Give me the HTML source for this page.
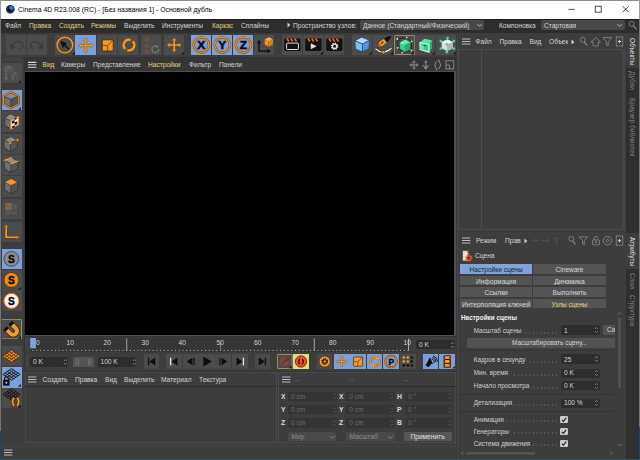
<!DOCTYPE html>
<html lang="ru">
<head>
<meta charset="utf-8">
<title>Cinema 4D R23.008 (RC) - [Без названия 1] - Основной дубль</title>
<style>
html,body{margin:0;padding:0;background:#3d3d3d;}
body{width:640px;height:460px;overflow:hidden;position:relative;font-family:"Liberation Sans",sans-serif;font-size:6.6px;color:#cfcfcf;}
#app{position:absolute;left:0;top:0;width:640px;height:460px;overflow:hidden;background:#3d3d3d;}
.abs,.t,.b,.p{position:absolute;}
.t{white-space:nowrap;line-height:10px;height:10px;}
.y{color:#e0d080;}
.w{color:#d4d4d4;}
.dim{color:#6e6e6e;}
.b{background:#4c4c4c;width:20.4px;height:20px;top:35px;}
.b svg,.lb svg,.tb svg{position:absolute;left:0;top:0;}
.lb{position:absolute;left:2px;width:19.5px;height:21px;background:#4b4b4b;}
.tb{position:absolute;top:354.300px;width:14.8px;height:15px;background:#4b4b4b;}
.blue{background:#7b9fd8;}
.fld{position:absolute;background:#2d2d2d;border-radius:2px;height:10px;}
.cl{position:absolute;font-weight:bold;color:#d8d8d8;line-height:10px;height:10px;font-size:6.8px;}
.cf{position:absolute;background:#353535;border-radius:1.5px;height:9.6px;}
.cv{position:absolute;color:#6c6c6c;line-height:10px;height:10px;white-space:nowrap;}
.sp{position:absolute;width:5px;height:8px;}
.lbl{position:absolute;white-space:nowrap;line-height:10px;height:10px;color:#cfcfcf;font-size:6.400px;}
.dots{position:absolute;height:0.900px;background:repeating-linear-gradient(to left,#8c8c8c 0,#8c8c8c 0.900px,transparent 0.900px,transparent 3.780px);}
.chk{position:absolute;width:7.8px;height:7.4px;background:#cbcbcb;border-radius:1.3px;}
.vt{position:absolute;white-space:nowrap;transform-origin:0 0;transform:rotate(90deg);line-height:10px;height:10px;}
.tabb{position:absolute;height:9.600px;background:#545454;text-align:center;line-height:11.400px;overflow:hidden;white-space:nowrap;color:#d8d8d8;}
</style>
</head>
<body>
<div id="app">

<!-- ===== title bar ===== -->
<div class="abs" id="titlebar" style="left:0;top:0;width:640px;height:18.700px;background:#ffffff;"></div>
<div class="abs" style="left:0;top:0;width:640px;height:1px;background:#8c8c8c;"></div>
<svg class="abs" style="left:5px;top:4px;" width="11" height="11" viewBox="0 0 11 11"><circle cx="5.3" cy="5.2" r="4.3" fill="#1a2748"/><circle cx="6.2" cy="4" r="2" fill="#3f74c8"/><circle cx="4.2" cy="6.3" r="1.6" fill="#0c1226"/><path d="M2.2 8.2 A4.3 4.3 0 0 0 8.6 8" stroke="#6d9be0" stroke-width="0.8" fill="none"/></svg>
<div class="t" style="left:18px;top:4.700px;font-size:7.800px;color:#000;transform:scaleX(0.876);transform-origin:0 0;">Cinema 4D R23.008 (RC) - [Без названия 1] - Основной дубль</div>
<svg class="abs" style="left:560px;top:0;" width="80" height="19" viewBox="0 0 80 19"><g stroke="#222" stroke-width="0.8" fill="none"><path d="M8.5 9.4H14.8"/><rect x="35.2" y="6.2" width="6" height="6"/><path d="M62.6 6.1L68.8 12.3M68.8 6.1L62.6 12.3"/></g></svg>

<!-- ===== menu bar ===== -->
<div class="abs" id="menubar" style="left:0;top:18.700px;width:640px;height:14.400px;background:#2d2d2d;"></div>
<div class="abs" style="left:0;top:18.700px;width:640px;height:1.500px;background:#1c1c1c;"></div>
<div class="t w" style="left:5px;top:20.5px;">Файл</div>
<div class="t y" style="left:29px;top:20.5px;">Правка</div>
<div class="t y" style="left:59px;top:20.5px;">Создать</div>
<div class="t y" style="left:91px;top:20.5px;">Режимы</div>
<div class="t w" style="left:124px;top:20.5px;">Выделить</div>
<div class="t w" style="left:162px;top:20.5px;">Инструменты</div>
<div class="t y" style="left:212px;top:20.5px;">Каркас</div>
<div class="t w" style="left:241px;top:20.5px;">Сплайны</div>
<svg class="abs" style="left:286.500px;top:22.300px;" width="4" height="6" viewBox="0 0 4 6"><path d="M0.5 0.5L3.3 3L0.5 5.5Z" fill="#d0d0d0"/></svg>
<div class="t w" style="left:293px;top:20.5px;">Пространство узлов:</div>
<div class="fld" style="left:360px;top:20.200px;width:124px;height:9.600px;background:#494949;"></div>
<div class="t w" style="left:363px;top:20.5px;font-size:6.5px;">Данное (Стандартный/Физический)</div>
<svg class="abs" style="left:476px;top:23px;" width="7" height="5" viewBox="0 0 7 5"><path d="M1.400 1.200L3.500 3.300L5.600 1.200" stroke="#d0d0d0" stroke-width="0.800" fill="none"/></svg>
<div class="t w" style="left:499px;top:20.5px;">Компоновка</div>
<div class="fld" style="left:541px;top:20.200px;width:84px;height:9.600px;background:#494949;"></div>
<div class="t w" style="left:544px;top:20.5px;">Стартовая</div>
<svg class="abs" style="left:616px;top:23px;" width="7" height="5" viewBox="0 0 7 5"><path d="M1.400 1.200L3.500 3.300L5.600 1.200" stroke="#d0d0d0" stroke-width="0.800" fill="none"/></svg>
<svg class="abs" style="left:628px;top:20px;" width="10" height="11" viewBox="0 0 10 11"><circle cx="3.600" cy="3.800" r="2.500" stroke="#8e8e8e" stroke-width="0.800" fill="none"/><path d="M5.300 5.700L8.400 9.400" stroke="#8e8e8e" stroke-width="1.100"/></svg>

<!-- ===== top toolbar ===== -->
<div class="abs" id="toolbar" style="left:0;top:33px;width:457px;height:24px;background:#3d3d3d;"></div>
<svg class="abs" style="left:1px;top:36px;" width="4" height="19" viewBox="0 0 4 19"><path d="M1.2 1V18M2.8 1V18" stroke="#5a5a5a" stroke-width="0.7" stroke-dasharray="0.8 0.9"/></svg>
<div class="b" id="b-undo" style="left:6px;"><svg width="20.5" height="20" viewBox="0 0 20.5 20"><path d="M14.2 14.2C18.4 11.8 17.6 6.4 12.4 6.4C9.8 6.4 7.8 8.2 6.4 10.8" stroke="#3c3c3c" stroke-width="1.5" fill="none"/><path d="M3.9 14.6L4.6 8.3L10 12.9Z" fill="#3c3c3c"/></svg></div>
<div class="b" id="b-redo" style="left:26.7px;"><svg width="20.5" height="20" viewBox="0 0 20.5 20"><g transform="translate(20.5 0) scale(-1 1)"><path d="M14.2 14.2C18.4 11.8 17.6 6.4 12.4 6.4C9.8 6.4 7.8 8.2 6.4 10.8" stroke="#3c3c3c" stroke-width="1.5" fill="none"/><path d="M3.9 14.6L4.6 8.3L10 12.9Z" fill="#3c3c3c"/></g></svg></div>
<div class="b" id="b-sel" style="left:55px;"><svg width="20.5" height="20" viewBox="0 0 20.5 20"><circle cx="9.900" cy="10.100" r="7.800" fill="none" stroke="#8a4a08" stroke-width="2"/><circle cx="9.900" cy="10.100" r="7.800" fill="none" stroke="#f39a2b" stroke-width="1.300"/><path d="M5.300 5.500L12 8.600L10.100 9.900L14.200 13.500L13.300 14.500L9.200 10.900L7.800 13.400Z" fill="#111"/><path d="M19.8 16.6V19.4H17Z" fill="#161616"/></svg></div>
<div class="b blue" id="b-move" style="left:75.300px;width:20.700px;"><svg width="20.5" height="20" viewBox="0 0 20.5 20"><g stroke="#8a4a08" fill="#8a4a08" transform="translate(0 0)"><g transform="rotate(0 10.9 10.5)"><path d="M10.9 10.5V5.499999999999999" stroke-width="2.4" fill="none"/><path d="M8.4 5.699999999999999L10.9 2.8L13.4 5.699999999999999Z" stroke-width="0.1"/></g><g transform="rotate(90 10.9 10.5)"><path d="M10.9 10.5V5.499999999999999" stroke-width="2.4" fill="none"/><path d="M8.4 5.699999999999999L10.9 2.8L13.4 5.699999999999999Z" stroke-width="0.1"/></g><g transform="rotate(180 10.9 10.5)"><path d="M10.9 10.5V5.499999999999999" stroke-width="2.4" fill="none"/><path d="M8.4 5.699999999999999L10.9 2.8L13.4 5.699999999999999Z" stroke-width="0.1"/></g><g transform="rotate(270 10.9 10.5)"><path d="M10.9 10.5V5.499999999999999" stroke-width="2.4" fill="none"/><path d="M8.4 5.699999999999999L10.9 2.8L13.4 5.699999999999999Z" stroke-width="0.1"/></g></g><g stroke="#f39a2b" fill="#f39a2b"><g transform="rotate(0 10.9 10.5)"><path d="M10.9 10.5V5.499999999999999" stroke-width="1.5" fill="none"/><path d="M8.9 5.699999999999999L10.9 3.3L12.9 5.699999999999999Z" stroke-width="0.1"/></g><g transform="rotate(90 10.9 10.5)"><path d="M10.9 10.5V5.499999999999999" stroke-width="1.5" fill="none"/><path d="M8.9 5.699999999999999L10.9 3.3L12.9 5.699999999999999Z" stroke-width="0.1"/></g><g transform="rotate(180 10.9 10.5)"><path d="M10.9 10.5V5.499999999999999" stroke-width="1.5" fill="none"/><path d="M8.9 5.699999999999999L10.9 3.3L12.9 5.699999999999999Z" stroke-width="0.1"/></g><g transform="rotate(270 10.9 10.5)"><path d="M10.9 10.5V5.499999999999999" stroke-width="1.5" fill="none"/><path d="M8.9 5.699999999999999L10.9 3.3L12.9 5.699999999999999Z" stroke-width="0.1"/></g></g></svg></div>
<div class="b" id="b-scale" style="left:96.5px;"><svg width="20.5" height="20" viewBox="0 0 20.5 20"><rect x="5.2" y="4.8" width="11" height="11.2" rx="1" fill="#f39a2b" stroke="#4a2a05" stroke-width="0.9"/><path d="M5.2 10.6H10.6V16M10.6 10.6L16 5" stroke="#6a3c08" stroke-width="0.8" fill="none"/></svg></div>
<div class="b" id="b-rot" style="left:117.5px;"><svg width="20.5" height="20" viewBox="0 0 20.5 20"><g stroke="#8a4a08"><path d="M7.250 13.850A5.300 5.300 0 0 1 12.370 4.980" fill="none" stroke-width="3"/><path d="M14.750 6.350A5.300 5.300 0 0 1 9.630 15.220" fill="none" stroke-width="3"/></g><path d="M13.300 5.300L12.700 3.300L11.900 6.600Z M8.700 14.900L9.300 16.900L10.100 13.600Z" fill="#f39a2b" stroke="#8a4a08" stroke-width="0.400"/><g stroke="#f39a2b"><path d="M7.250 13.850A5.300 5.300 0 0 1 12.370 4.980" fill="none" stroke-width="2.200"/><path d="M14.750 6.350A5.300 5.300 0 0 1 9.630 15.220" fill="none" stroke-width="2.200"/></g></svg></div>
<div class="b" id="b-psr" style="left:141px;"><svg width="20.5" height="20" viewBox="0 0 20.5 20"><g font-family="Liberation Sans,sans-serif" font-weight="bold" font-size="6.200" fill="#87503f"><text x="3.300" y="6.600">P</text><text x="3.300" y="12.600">S</text><text x="3.300" y="18.500">R</text></g><path d="M16.300 11.500A3.400 3.400 0 1 0 17.800 14.300" fill="none" stroke="#7e7e7e" stroke-width="1.100"/><path d="M15.200 9.900L17.900 11.600L15.300 13Z" fill="#7e7e7e"/></svg></div>
<div class="b" id="b-plus" style="left:163.5px;"><svg width="20.5" height="20" viewBox="0 0 20.5 20"><g stroke="#8a4a08" fill="#8a4a08"><g transform="rotate(0 10.2 10)"><path d="M10.2 10V5.1000000000000005" stroke-width="2.2" fill="none"/><path d="M7.8999999999999995 5.300000000000001L10.2 2.7L12.5 5.300000000000001Z" stroke-width="0.1"/></g><g transform="rotate(90 10.2 10)"><path d="M10.2 10V5.1000000000000005" stroke-width="2.2" fill="none"/><path d="M7.8999999999999995 5.300000000000001L10.2 2.7L12.5 5.300000000000001Z" stroke-width="0.1"/></g><g transform="rotate(180 10.2 10)"><path d="M10.2 10V5.1000000000000005" stroke-width="2.2" fill="none"/><path d="M7.8999999999999995 5.300000000000001L10.2 2.7L12.5 5.300000000000001Z" stroke-width="0.1"/></g><g transform="rotate(270 10.2 10)"><path d="M10.2 10V5.1000000000000005" stroke-width="2.2" fill="none"/><path d="M7.8999999999999995 5.300000000000001L10.2 2.7L12.5 5.300000000000001Z" stroke-width="0.1"/></g></g><g stroke="#f39a2b" fill="#f39a2b"><g transform="rotate(0 10.2 10)"><path d="M10.2 10V5.199999999999999" stroke-width="1.4" fill="none"/><path d="M8.299999999999999 5.3999999999999995L10.2 3.0999999999999996L12.1 5.3999999999999995Z" stroke-width="0.1"/></g><g transform="rotate(90 10.2 10)"><path d="M10.2 10V5.199999999999999" stroke-width="1.4" fill="none"/><path d="M8.299999999999999 5.3999999999999995L10.2 3.0999999999999996L12.1 5.3999999999999995Z" stroke-width="0.1"/></g><g transform="rotate(180 10.2 10)"><path d="M10.2 10V5.199999999999999" stroke-width="1.4" fill="none"/><path d="M8.299999999999999 5.3999999999999995L10.2 3.0999999999999996L12.1 5.3999999999999995Z" stroke-width="0.1"/></g><g transform="rotate(270 10.2 10)"><path d="M10.2 10V5.199999999999999" stroke-width="1.4" fill="none"/><path d="M8.299999999999999 5.3999999999999995L10.2 3.0999999999999996L12.1 5.3999999999999995Z" stroke-width="0.1"/></g></g><path d="M19.8 16.6V19.4H17Z" fill="#161616"/></svg></div>
<div class="b blue" id="b-x" style="left:191px;"><svg width="20.5" height="20" viewBox="0 0 20.5 20"><circle cx="10.350" cy="9.900" r="7.600" fill="none" stroke="#6a3a08" stroke-width="2.300"/><circle cx="10.350" cy="9.900" r="7.600" fill="none" stroke="#f0871a" stroke-width="1.600"/><text transform="translate(10.350 13.850) scale(1.100 1)" x="0" y="0" text-anchor="middle" font-family="Liberation Sans,sans-serif" font-weight="bold" font-size="10.900" fill="#0c0c0c" stroke="#0c0c0c" stroke-width="0.500">X</text></svg></div>
<div class="b blue" id="b-y" style="left:212px;"><svg width="20.5" height="20" viewBox="0 0 20.5 20"><circle cx="10.350" cy="9.900" r="7.600" fill="none" stroke="#6a3a08" stroke-width="2.300"/><circle cx="10.350" cy="9.900" r="7.600" fill="none" stroke="#f0871a" stroke-width="1.600"/><text transform="translate(10.350 13.850) scale(1.100 1)" x="0" y="0" text-anchor="middle" font-family="Liberation Sans,sans-serif" font-weight="bold" font-size="10.900" fill="#0c0c0c" stroke="#0c0c0c" stroke-width="0.500">Y</text></svg></div>
<div class="b blue" id="b-z" style="left:233px;"><svg width="20.5" height="20" viewBox="0 0 20.5 20"><circle cx="10.350" cy="9.900" r="7.600" fill="none" stroke="#6a3a08" stroke-width="2.300"/><circle cx="10.350" cy="9.900" r="7.600" fill="none" stroke="#f0871a" stroke-width="1.600"/><text transform="translate(10.350 13.850) scale(1.100 1)" x="0" y="0" text-anchor="middle" font-family="Liberation Sans,sans-serif" font-weight="bold" font-size="10.900" fill="#0c0c0c" stroke="#0c0c0c" stroke-width="0.500">Z</text></svg></div>
<div class="b" id="b-coord" style="left:254px;"><svg width="20.5" height="20" viewBox="0 0 20.5 20"><path d="M5.100 7V16.100H14.500" stroke="#0c0c0c" stroke-width="1.300" fill="none"/><path d="M3.300 8.200L5.100 4.600L6.900 8.200Z M13.400 14.300L17 16.100L13.400 17.900Z" fill="#0c0c0c"/><path d="M10.500 4.600L15 2.300L19 4.300L18.600 9.400L14.400 11.800L10.300 9.400Z" fill="#f39a2b" stroke="#7a4508" stroke-width="0.600" stroke-linejoin="round"/><path d="M10.500 4.600L15 2.300L19 4.300L14.600 6.800Z" fill="#f7ad4e"/><path d="M14.600 6.800L19 4.300L18.600 9.400L14.400 11.800Z" fill="#e08418"/><path d="M10.500 4.600L14.600 6.800L19 4.300M14.600 6.800L14.400 11.800" stroke="#8a5010" stroke-width="0.500" fill="none"/></svg></div>
<div class="b" id="b-clap1" style="left:282px;"><svg width="20.5" height="20" viewBox="0 0 20.5 20"><rect x="2.200" y="3.500" width="16.300" height="12.400" rx="1.300" fill="#121212"/><path d="M5 3.600L6.900 6.400M8.800 3.600L10.700 6.400M12.600 3.600L14.500 6.400" stroke="#f0642a" stroke-width="1.700"/><rect x="4.600" y="8.100" width="11.800" height="6.400" rx="0.800" fill="none" stroke="#e4e4e4" stroke-width="1"/></svg></div>
<div class="b" id="b-clap2" style="left:303px;"><svg width="20.5" height="20" viewBox="0 0 20.5 20"><rect x="2.200" y="3.500" width="16.300" height="12.400" rx="1.300" fill="#121212"/><path d="M5 3.600L6.900 6.400M8.800 3.600L10.700 6.400M12.600 3.600L14.500 6.400" stroke="#f0642a" stroke-width="1.700"/><path d="M7.800 8.300L13.600 11.300L7.800 14.300Z" fill="#e4e4e4"/><path d="M19.8 16.6V19.4H17Z" fill="#161616"/></svg></div>
<div class="b" id="b-clap3" style="left:324px;"><svg width="20.5" height="20" viewBox="0 0 20.5 20"><rect x="2.200" y="3.500" width="16.300" height="12.400" rx="1.300" fill="#121212"/><path d="M5 3.600L6.900 6.400M8.800 3.600L10.700 6.400M12.600 3.600L14.500 6.400" stroke="#f0642a" stroke-width="1.700"/><circle cx="10.600" cy="11.300" r="2.200" fill="none" stroke="#e4e4e4" stroke-width="1.400"/><circle cx="10.600" cy="11.300" r="3.200" fill="none" stroke="#e4e4e4" stroke-width="1.200" stroke-dasharray="1.250 1.260"/></svg></div>
<div class="b" id="b-cube" style="left:352px;"><svg width="20.5" height="20" viewBox="0 0 20.5 20"><path d="M2.8999999999999995 5.914999999999999L9.469999999999999 2.2649999999999997L17.5 5.184999999999999L10.565 9.0175Z" fill="#b4dcfa" stroke="#244a78" stroke-width="0.7" stroke-linejoin="round"/><path d="M2.8999999999999995 5.914999999999999L10.565 9.0175L10.565 16.865L3.483999999999999 13.9523Z" fill="#7dbdf0" stroke="#244a78" stroke-width="0.7" stroke-linejoin="round"/><path d="M10.565 9.0175L17.5 5.184999999999999L16.916 13.41575L10.565 16.865Z" fill="#4f97d8" stroke="#244a78" stroke-width="0.7" stroke-linejoin="round"/><path d="M19.8 16.6V19.4H17Z" fill="#161616"/></svg></div>
<div class="b" id="b-pen" style="left:373px;"><svg width="20.5" height="20" viewBox="0 0 20.5 20"><path d="M4.400 12.200L6 6.400L11 3.400L14.300 7.400L9.600 11.200Z" fill="#f39a2b" stroke="#4a2a05" stroke-width="0.600"/><path d="M11 3.400L15 1.200L18.600 1.500L14.300 7.400Z" fill="#111"/><path d="M4.600 12L9.300 7.600" stroke="#3a2005" stroke-width="0.800"/><circle cx="9.500" cy="7.400" r="0.900" fill="#3a2005"/><path d="M2.500 13.700Q10.400 20.600 18.500 13.300" stroke="#2a2a2a" stroke-width="2.200" fill="none"/><path d="M2.500 13.700Q10.400 20.600 18.500 13.300" stroke="#e6e6e6" stroke-width="1.200" fill="none"/><circle cx="10.400" cy="17.200" r="1.700" fill="#f39a2b" stroke="#4a2a05" stroke-width="0.500"/><path d="M19.8 16.6V19.4H17Z" fill="#161616"/></svg></div>
<div class="b" id="b-gen" style="left:393.700px;width:21.300px;"><svg width="21.3" height="20" viewBox="0 0 21.3 20"><rect x="0.400" y="0.400" width="20.500" height="19.200" rx="1" fill="none" stroke="#b3ab68" stroke-width="0.800"/><path d="M3.300 4L12.700 2.300L17.600 6.400L17.400 15.400L8.200 17.600L3.600 12.800Z M3.300 4L8.300 8.200L17.600 6.400M8.300 8.200L8.200 17.600" fill="none" stroke="#1e1e1e" stroke-width="0.800"/><path d="M6 7.200L11.500 4.800L16.300 7.400L16 14.300L10.600 17L6.200 13.600Z" fill="#2fd98c"/><path d="M6 7.200L11.500 4.800L16.300 7.400L10.800 9.800Z" fill="#5cf0ae"/><path d="M10.800 9.800L16.300 7.400L16 14.300L10.600 17Z" fill="#1fb06e"/><circle cx="3.3" cy="4" r="0.900" fill="#e8e8e8"/><circle cx="12.7" cy="2.3" r="0.900" fill="#e8e8e8"/><circle cx="17.6" cy="6.4" r="0.900" fill="#e8e8e8"/><circle cx="3.6" cy="12.8" r="0.900" fill="#e8e8e8"/><circle cx="17.4" cy="15.4" r="0.900" fill="#e8e8e8"/><circle cx="8.2" cy="17.6" r="0.900" fill="#e8e8e8"/><circle cx="8.3" cy="8.2" r="0.900" fill="#e8e8e8"/><path d="M19.8 16.6V19.4H17Z" fill="#161616"/></svg></div>
<div class="b" id="b-hollow" style="left:415px;"><svg width="20.5" height="20" viewBox="0 0 20.5 20"><path d="M4.800 7.500L9.500 3.700L17.300 5.600L14.100 9.500Z" fill="#4fe8a2"/><path d="M14.100 9.500L17.300 5.600L17 13.300L14 17.300Z" fill="#23b572"/><path d="M4.800 7.500L14.100 9.500L14 17.300L5.200 14.600Z" fill="#2fd98c" stroke="#f2f2f2" stroke-width="1.050" stroke-linejoin="round"/><path d="M6.200 9L9 11.300V14.200L6.200 13.800Z" fill="#54eaa8"/><path d="M8.600 9.900L11.400 10.500V11.700L8.600 11.100Z" fill="#1a4a34"/><path d="M19.8 16.6V19.4H17Z" fill="#161616"/></svg></div>
<div class="b" id="b-def" style="left:436px;"><svg width="20.5" height="20" viewBox="0 0 20.5 20"><path d="M5.600 7L11.300 4.600L17 7L16.800 13.400L11 16L5.800 13.400Z" fill="#dcdcdc"/><path d="M5.600 7L11.300 4.600L17 7L11.100 9.600Z" fill="#f4f4f4"/><path d="M11.100 9.600L17 7L16.800 13.400L11 16Z" fill="#b4b4b4"/><circle cx="11.5" cy="3.2" r="1.350" fill="#2fe08e"/><circle cx="4.9" cy="6.2" r="1.350" fill="#2fe08e"/><circle cx="17.9" cy="6.2" r="1.350" fill="#2fe08e"/><circle cx="10.9" cy="9.4" r="1.350" fill="#2fe08e"/><circle cx="4.9" cy="13.6" r="1.350" fill="#2fe08e"/><circle cx="17.9" cy="13.6" r="1.350" fill="#2fe08e"/><circle cx="10.9" cy="17.2" r="1.350" fill="#2fe08e"/><path d="M19.8 16.6V19.4H17Z" fill="#161616"/></svg></div>

<!-- ===== left toolbar ===== -->
<div class="abs" id="leftbar" style="left:0;top:57px;width:24px;height:389px;background:#3d3d3d;"></div>
<svg class="abs" style="left:2px;top:57px;" width="20" height="5" viewBox="0 0 20 5"><path d="M1 1.5H19M1 3.3H19" stroke="#5a5a5a" stroke-width="0.7" stroke-dasharray="0.8 0.9"/></svg>
<div class="lb" id="l-make" style="top:62.5px;height:20.5px;"><svg width="19.5" height="20.3" viewBox="0 0 19.5 20.3"><path d="M2 4.5L6 2.5L11 4.5L6.5 6.3Z" fill="#646464"/><path d="M2 4.5L6.5 6.3L6.5 10.5L2 8.8Z" fill="#5c5c5c"/><path d="M6.5 6.3L11 4.5L11 8.5L6.5 10.5Z" fill="#565656"/><path d="M6 2.5L11 4.5L11 8.5L6.5 10.5L2 8.8L2 4.5Z M2 4.5L6.5 6.3L11 4.5M6.5 6.3L6.5 10.5" fill="none" stroke="#505050" stroke-width="0.5" stroke-linejoin="round"/><path d="M4.300 10V15.300" stroke="#686868" stroke-width="1.600"/><path d="M1.900 14.600H6.700L4.300 17.800Z" fill="#686868"/><path d="M8.9 10.6L12.8 8.6L16.9 10.6L12.8 12.6Z" fill="#7c5a4c"/><path d="M8.9 10.6L12.8 12.6L12.8 18.4L8.9 16.2Z" fill="#5e5e5e"/><path d="M12.8 12.6L16.9 10.6L16.9 16.2L12.8 18.4Z" fill="#525252"/><path d="M12.8 8.6L16.9 10.6L16.9 16.2L12.8 18.4L8.9 16.2L8.9 10.6Z M8.9 10.6L12.8 12.6L16.9 10.6M12.8 12.6L12.8 18.4" fill="none" stroke="#464646" stroke-width="0.5" stroke-linejoin="round"/><path d="M18.900 17V19.800H16.100Z" fill="#161616"/></svg></div>
<div class="lb blue" id="l-model" style="top:90px;height:20.3px;"><svg width="19.5" height="20.3" viewBox="0 0 19.5 20.3"><path d="M1.6 6L8.9 2.1L16.7 6L8.9 9.3Z" fill="#8c8c8c"/><path d="M1.6 6L8.9 9.3L8.9 18.2L1.6 14Z" fill="#6f6f6f"/><path d="M8.9 9.3L16.7 6L16.7 14L8.9 18.2Z" fill="#545454"/><path d="M8.9 2.1L16.7 6L16.7 14L8.9 18.2L1.6 14L1.6 6Z M1.6 6L8.9 9.3L16.7 6M8.9 9.3L8.9 18.2" fill="none" stroke="#2c2c2c" stroke-width="0.7" stroke-linejoin="round"/><path d="M8.900 2.100L16.700 6L16.700 14L8.900 18.200L1.600 14L1.600 6Z" fill="none" stroke="#5a3005" stroke-width="1.900" stroke-linejoin="round"/><path d="M8.900 2.100L16.700 6L16.700 14L8.900 18.200L1.600 14L1.600 6Z" fill="none" stroke="#f08a1c" stroke-width="1.100" stroke-linejoin="round"/><path d="M18.900 17V19.800H16.100Z" fill="#161616"/></svg></div>
<div class="lb" id="l-tex" style="top:111px;height:20.5px;"><svg width="19.5" height="20.3" viewBox="0 0 19.5 20.3"><path d="M2.8 6.8L8.4 2.8L15.5 6.3L8.7 10Z" fill="#8c8c8c"/><path d="M2.8 6.8L8.7 10L8.7 17.8L2.8 14.3Z" fill="#6f6f6f"/><path d="M8.7 10L15.5 6.3L15.5 14L8.7 17.8Z" fill="#545454"/><path d="M8.4 2.8L15.5 6.3L15.5 14L8.7 17.8L2.8 14.3L2.8 6.8Z M2.8 6.8L8.7 10L15.5 6.3M8.7 10L8.7 17.8" fill="none" stroke="#2c2c2c" stroke-width="0.7" stroke-linejoin="round"/><path d="M8.800 9.600L16.600 5.600L16.600 13.600L8.800 18Z" fill="#f4f4f4" stroke="#f08a1c" stroke-width="1.200" stroke-linejoin="round"/><path d="M10 10.300L12.600 9L12.600 11.600L10 12.900Z M12.600 11.600L15.300 10.300L15.300 12.900L12.600 14.200Z M10 15.500L12.600 14.200L12.600 16.800L10 16.700Z M12.600 9L15.300 7.700L15.300 7.600L12.600 6.500Z" fill="#111"/></svg></div>
<div class="lb" id="l-pt" style="top:134px;height:20.3px;"><svg width="19.5" height="20.3" viewBox="0 0 19.5 20.3"><path d="M2 6L8.9 2.6L15.5 6.1L8.1 9.1Z" fill="#8c8c8c"/><path d="M2 6L8.1 9.1L8.7 17.6L2 13.8Z" fill="#6f6f6f"/><path d="M8.1 9.1L15.5 6.1L15.5 13.5L8.7 17.6Z" fill="#545454"/><path d="M8.9 2.6L15.5 6.1L15.5 13.5L8.7 17.6L2 13.8L2 6Z M2 6L8.1 9.1L15.5 6.1M8.1 9.1L8.7 17.6" fill="none" stroke="#2c2c2c" stroke-width="0.7" stroke-linejoin="round"/><circle cx="8.100" cy="9.100" r="1.450" fill="#f39a2b" stroke="#5a3005" stroke-width="0.400"/><circle cx="15.500" cy="6.100" r="1.450" fill="#f39a2b" stroke="#5a3005" stroke-width="0.400"/></svg></div>
<div class="lb" id="l-edge" style="top:155px;height:20.3px;"><svg width="19.5" height="20.3" viewBox="0 0 19.5 20.3"><path d="M2.4 5.3L9.8 2.7L15.9 6.2L8.9 8.8Z" fill="#8c8c8c"/><path d="M2.4 5.3L8.9 8.8L8.9 17.6L2.4 13.6Z" fill="#6f6f6f"/><path d="M8.9 8.8L15.9 6.2L15.9 13.8L8.9 17.6Z" fill="#545454"/><path d="M9.8 2.7L15.9 6.2L15.9 13.8L8.9 17.6L2.4 13.6L2.4 5.3Z M2.4 5.3L8.9 8.8L15.9 6.2M8.9 8.8L8.9 17.6" fill="none" stroke="#2c2c2c" stroke-width="0.7" stroke-linejoin="round"/><path d="M2.400 5.300L9.800 2.700M8.900 8.800L15.900 6.200" stroke="#f39a2b" stroke-width="1.300" stroke-linecap="round"/></svg></div>
<div class="lb" id="l-poly" style="top:176px;height:20.5px;"><svg width="19.5" height="20.3" viewBox="0 0 19.5 20.3"><path d="M2.6 5.9L9.2 2.7L15.7 6.2L8.9 9.5Z" fill="#8c8c8c"/><path d="M2.6 5.9L8.9 9.5L8.9 17.8L2.6 13.8Z" fill="#6f6f6f"/><path d="M8.9 9.5L15.7 6.2L15.7 13.8L8.9 17.8Z" fill="#545454"/><path d="M9.2 2.7L15.7 6.2L15.7 13.8L8.9 17.8L2.6 13.8L2.6 5.9Z M2.6 5.9L8.9 9.5L15.7 6.2M8.9 9.5L8.9 17.8" fill="none" stroke="#2c2c2c" stroke-width="0.7" stroke-linejoin="round"/><path d="M2.600 5.900L9.200 2.700L15.700 6.200L8.900 9.500Z" fill="#f39a2b" stroke="#5a3a10" stroke-width="0.500"/></svg></div>
<div class="lb" id="l-uv" style="top:198.5px;height:20px;"><svg width="19.5" height="20.3" viewBox="0 0 19.5 20.3"><rect x="2.800" y="3.700" width="7.300" height="7.500" fill="#7a644c"/><rect x="11.100" y="5" width="4" height="5.400" fill="#585858"/><rect x="3.800" y="12.300" width="5.200" height="3.800" fill="#585858"/><rect x="10.200" y="12" width="4.800" height="4.100" fill="#585858"/><rect x="2.300" y="3.200" width="13.300" height="13.400" fill="none" stroke="#454545" stroke-width="0.500"/></svg></div>
<div class="lb" id="l-axis" style="top:221.5px;height:20.3px;"><svg width="19.5" height="20.3" viewBox="0 0 19.5 20.3"><path d="M4.200 4.500V15.300H15" stroke="#6a3a08" stroke-width="2.400" fill="none"/><path d="M4.200 4.500V15.300H15" stroke="#f39a2b" stroke-width="1.600" fill="none"/><path d="M2.400 5.600L4.200 2.300L6 5.600Z M14.200 13.500L17.500 15.300L14.200 17.100Z" fill="#f39a2b" stroke="#6a3a08" stroke-width="0.400"/></svg></div>
<div class="lb blue" id="l-s1" style="top:248.8px;height:20.3px;"><svg width="19.5" height="20.3" viewBox="0 0 19.5 20.3"><circle cx="9.400" cy="9.900" r="7.4" fill="#8b8b8b" stroke="#3a3a3a" stroke-width="0.8"/><text x="9.400" y="13.600" text-anchor="middle" font-family="Liberation Sans,sans-serif" font-weight="bold" font-size="10.200" fill="#0c0c0c" stroke="#0c0c0c" stroke-width="0.400">S</text></svg></div>
<div class="lb" id="l-s2" style="top:269.6px;height:20.3px;"><svg width="19.5" height="20.3" viewBox="0 0 19.5 20.3"><circle cx="9.400" cy="9.900" r="7.4" fill="#f08a1c" stroke="#3a2a1a" stroke-width="0.7"/><text x="9.400" y="13.600" text-anchor="middle" font-family="Liberation Sans,sans-serif" font-weight="bold" font-size="10.200" fill="#0c0c0c" stroke="#0c0c0c" stroke-width="0.400">S</text><path d="M18.900 17V19.800H16.100Z" fill="#161616"/></svg></div>
<div class="lb" id="l-s3" style="top:290.4px;height:20.5px;"><svg width="19.5" height="20.3" viewBox="0 0 19.5 20.3"><circle cx="9.400" cy="10.900" r="8.200" fill="#7a2a05"/><circle cx="9.400" cy="10.900" r="7.5" fill="#f2f2f2" stroke="#f0741c" stroke-width="1.0"/><text x="9.400" y="14.600" text-anchor="middle" font-family="Liberation Sans,sans-serif" font-weight="bold" font-size="10.200" fill="#0c0c0c" stroke="#0c0c0c" stroke-width="0.400">S</text></svg></div>
<div class="lb" id="l-snap" style="top:319px;height:20.3px;"><svg width="19.5" height="20.3" viewBox="0 0 19.5 20.3"><rect x="-0.400" y="0.200" width="20" height="19.800" rx="1.300" fill="none" stroke="#b3ab68" stroke-width="0.900"/><g transform="translate(0.600 0.800) rotate(-45 10.600 11.200)"><path d="M6.800 3.800V11.200A3.800 3.800 0 0 0 14.400 11.200V3.800" fill="none" stroke="#3a2005" stroke-width="5"/><path d="M6.800 5.500V11.200A3.800 3.800 0 0 0 14.400 11.200V5.500" fill="none" stroke="#f39a2b" stroke-width="4"/><path d="M6.800 3.300V6.300M14.400 3.300V6.300" stroke="#111" stroke-width="4.600"/></g><path d="M18.900 17V19.800H16.100Z" fill="#161616"/></svg></div>
<div class="lb" id="l-grid1" style="top:346.3px;height:20.2px;"><svg width="19.5" height="20.3" viewBox="0 0 19.5 20.3"><path d="M0.6999999999999993 10.2L9.5 4.199999999999999L18.3 10.2L9.5 16.2Z" fill="#f39a2b"/><path d="M0.70 10.20L9.50 16.20M0.70 10.20L9.50 4.20M2.90 8.70L11.70 14.70M2.90 11.70L11.70 5.70M5.10 7.20L13.90 13.20M5.10 13.20L13.90 7.20M7.30 5.70L16.10 11.70M7.30 14.70L16.10 8.70M9.50 4.20L18.30 10.20M9.50 16.20L18.30 10.20" stroke="#5a3005" stroke-width="0.9" fill="none"/></svg></div>
<div class="lb blue" id="l-grid2" style="top:367px;height:20.5px;"><svg width="19.5" height="20.3" viewBox="0 0 19.5 20.3"><path d="M0.90 7.40L9.50 13.20M0.90 7.40L9.50 1.60M3.05 5.95L11.65 11.75M3.05 8.85L11.65 3.05M5.20 4.50L13.80 10.30M5.20 10.30L13.80 4.50M7.35 3.05L15.95 8.85M7.35 11.75L15.95 5.95M9.50 1.60L18.10 7.40M9.50 13.20L18.10 7.40" stroke="#111" stroke-width="0.9" fill="none"/><rect x="1.200" y="12.800" width="6.400" height="5.800" fill="#0c0c0c"/><path d="M2.600 13V11.600A1.800 1.800 0 0 1 6.200 11.600V13" stroke="#0c0c0c" stroke-width="1.100" fill="none"/><rect x="3.600" y="14.800" width="1.600" height="1.800" fill="#dcdcdc"/><path d="M18.900 17V19.800H16.100Z" fill="#161616"/></svg></div>
<div class="lb" id="l-grid3" style="top:388px;height:20.3px;"><svg width="19.5" height="20.3" viewBox="0 0 19.5 20.3"><path d="M0.90 6.40L9.50 12.00M0.90 6.40L9.50 0.80M3.05 5.00L11.65 10.60M3.05 7.80L11.65 2.20M5.20 3.60L13.80 9.20M5.20 9.20L13.80 3.60M7.35 2.20L15.95 7.80M7.35 10.60L15.95 5.00M9.50 0.80L18.10 6.40M9.50 12.00L18.10 6.40" stroke="#111" stroke-width="0.9" fill="none"/><path d="M11.700 10.300Q9.300 13.800 11.700 17.300M15.500 10.300Q17.900 13.800 15.500 17.300" stroke="#3a2005" stroke-width="2.700" fill="none" stroke-linecap="round"/><path d="M11.700 10.300Q9.300 13.800 11.700 17.300M15.500 10.300Q17.900 13.800 15.500 17.300" stroke="#f39a2b" stroke-width="1.800" fill="none" stroke-linecap="round"/><path d="M18.900 17V19.800H16.100Z" fill="#161616"/></svg></div>

<!-- ===== viewport ===== -->
<div class="abs" id="vpanel" style="left:23.5px;top:57px;width:433px;height:315px;background:#343434;"></div>
<div class="abs" id="vhead" style="left:24.5px;top:57.7px;width:431.5px;height:14px;background:#363636;"></div>
<div class="abs" id="vframe" style="left:24.5px;top:71px;width:431.5px;height:265px;background:#4e4e4e;"></div>
<div class="abs" id="viewport" style="left:25.4px;top:72px;width:429px;height:263.1px;background:#000;"></div>
<svg class="abs" style="left:27px;top:60px;" width="11" height="9" viewBox="0 0 11 9"><path d="M1 2.4H9.4M1 4.8H9.4M1 7.2H9.4" stroke="#d6d6d6" stroke-width="1.1"/></svg>
<div class="t y" style="left:42.5px;top:60px;">Вид</div>
<div class="t w" style="left:61px;top:60px;">Камеры</div>
<div class="t w" style="left:93px;top:60px;">Представление</div>
<div class="t y" style="left:148px;top:60px;">Настройки</div>
<div class="t w" style="left:189px;top:60px;">Фильтр</div>
<div class="t w" style="left:219px;top:60px;">Панели</div>

<svg class="abs" style="left:408px;top:58px;" width="48" height="13" viewBox="0 0 48 13"><g fill="#8a8a8a" stroke="none">
<path d="M6 2.300L7.900 4.600H4.100Z M6 11.700L7.900 9.400H4.100Z M1.400 7L3.700 5.100V8.900Z M10.600 7L8.300 5.100V8.900Z"/><rect x="5.500" y="4.200" width="1" height="5.600"/><rect x="3.300" y="6.500" width="5.400" height="1"/>
<path d="M17.800 2.200L19.700 4.500H15.900Z M17.800 11.800L20.600 8.600H15Z"/><rect x="17.300" y="4" width="1" height="5"/><path d="M14.300 7.200H16.200V8H14.300Z M19.400 7.200H21.300V8H19.400Z"/>
</g><g fill="none" stroke="#8a8a8a" stroke-width="1">
<path d="M28.200 3.200Q25.400 7 28.200 10.800M31.200 3.200Q34 7 31.200 10.800"/>
<rect x="37.900" y="2.800" width="7.800" height="8.200" stroke-width="0.900"/><path d="M38 7H41.600V11" stroke-width="0.900"/>
</g><path d="M29.300 2.600L31.300 1.500L31.600 4Z M30.100 11.400L28.100 12.500L27.800 10Z" fill="#8a8a8a"/></svg>

<!-- ===== timeline ===== -->
<div class="abs" id="timeline" style="left:24.5px;top:336.5px;width:431.5px;height:34.5px;background:#3d3d3d;"></div>
<svg class="abs" style="left:25px;top:338px;" width="4" height="30" viewBox="0 0 4 30"><path d="M1.2 0.5V11.5M2.8 0.5V11.5M1.2 18V29M2.8 18V29" stroke="#5a5a5a" stroke-width="0.7" stroke-dasharray="0.8 0.9"/></svg>
<div class="abs" id="ruler" style="left:29.5px;top:337.5px;width:379.5px;height:14.5px;background:#363636;"></div>
<svg class="abs" style="left:29px;top:337px;" width="382" height="16" viewBox="0 0 382 16">
<path d="M3.500 13.400H380" stroke="#bcbcbc" stroke-width="1" stroke-dasharray="1 2.750"/>
<path d="M191.500 4V14" stroke="#8a8a8a" stroke-width="0.8"/>
<path d="M97.750 1.5V13.5M285.250 1.5V13.500" stroke="#c8c8c8" stroke-width="0.750"/>
<path d="M379.500 1.500V13.500" stroke="#d0d0d0" stroke-width="0.750"/>
<rect x="1.200" y="1" width="5.700" height="10.300" fill="#7fa4dc"/>
</svg>
<div class="t w" style="left:36px;top:337.800px;font-size:6.600px;">0</div>
<div class="t w" style="left:66.500px;top:337.800px;">10</div>
<div class="t w" style="left:103.500px;top:337.800px;">20</div>
<div class="t w" style="left:141.500px;top:337.800px;">30</div>
<div class="t w" style="left:178.500px;top:337.800px;">40</div>
<div class="t w" style="left:216.500px;top:337.800px;">50</div>
<div class="t w" style="left:254px;top:337.800px;">60</div>
<div class="t w" style="left:291.500px;top:337.800px;">70</div>
<div class="t w" style="left:329px;top:337.800px;">80</div>
<div class="t w" style="left:366.500px;top:337.800px;">90</div>
<div class="t w" style="left:403.500px;top:337.800px;width:7.600px;overflow:hidden;">100</div>
<div class="fld" style="left:415.500px;top:340.300px;width:39.500px;height:9px;"></div>
<div class="t w" style="left:419px;top:340px;">0 K</div>
<div class="fld" style="left:29.500px;top:356.700px;width:38.500px;height:10.300px;"></div>
<div class="t w" style="left:33px;top:357px;">0 K</div>
<div class="abs" style="left:73px;top:356.700px;width:20.500px;height:10.300px;background:#555;border-radius:1.500px;"></div>
<div class="abs" style="left:76px;top:358.700px;width:0.700px;height:6.300px;background:#6e6e6e;"></div><div class="abs" style="left:77.800px;top:358.700px;width:0.700px;height:6.300px;background:#6e6e6e;"></div><div class="abs" style="left:88px;top:358.700px;width:2.500px;height:6.300px;background:#676767;"></div>
<div class="fld" style="left:97.800px;top:356.700px;width:38.700px;height:10.300px;"></div>
<div class="t w" style="left:100.500px;top:357px;">100 K</div>
<div class="tb" id="t-first" style="left:144px;"><svg width="14.8" height="15" viewBox="0 0 14.8 15"><path d="M4.600 3.700V11.300" stroke="#0e0e0e" stroke-width="1.300"/><path d="M11.200 3.500V11.500L5.300 7.500Z" fill="#0e0e0e"/></svg></div>
<div class="tb" id="t-prevk" style="left:166.300px;width:16px;"><svg width="16" height="15" viewBox="0 0 16 15"><path d="M4.600 3.600V11.400" stroke="#e8e8e8" stroke-width="1.300"/><path d="M11.400 3.500V11.500L5.500 7.500Z" fill="#0e0e0e"/></svg></div>
<div class="tb" id="t-prevf" style="left:182.600px;width:16px;"><svg width="16" height="15" viewBox="0 0 16 15"><path d="M9.400 3.800V11.200L3.600 7.500Z" fill="#0e0e0e"/><path d="M11 3.800V11.200" stroke="#0e0e0e" stroke-width="1.200"/></svg></div>
<div class="tb" id="t-play" style="left:199px;width:16px;"><svg width="16" height="15" viewBox="0 0 16 15"><path d="M4.300 2.600V12.400L12.800 7.500Z" fill="#0e0e0e"/></svg></div>
<div class="tb" id="t-nextf" style="left:215.400px;width:16px;"><svg width="16" height="15" viewBox="0 0 16 15"><path d="M6.600 3.800V11.200L12.400 7.500Z" fill="#0e0e0e"/><path d="M5 3.800V11.200" stroke="#0e0e0e" stroke-width="1.200"/></svg></div>
<div class="tb" id="t-nextk" style="left:231.800px;width:16px;"><svg width="16" height="15" viewBox="0 0 16 15"><path d="M11.400 3.600V11.400" stroke="#e8e8e8" stroke-width="1.300"/><path d="M4.600 3.500V11.500L10.500 7.500Z" fill="#0e0e0e"/></svg></div>
<div class="tb" id="t-last" style="left:255px;"><svg width="14.8" height="15" viewBox="0 0 14.8 15"><path d="M10.400 3.700V11.300" stroke="#0e0e0e" stroke-width="1.300"/><path d="M3.800 3.500V11.500L9.700 7.500Z" fill="#0e0e0e"/></svg></div>
<div class="tb" id="t-rec" style="left:277px;width:15.500px;"><svg width="15.5" height="15" viewBox="0 0 15.5 15"><rect x="0.400" y="0.400" width="14.700" height="14.200" rx="1" fill="none" stroke="#b3ab68" stroke-width="0.800"/><circle cx="7.500" cy="7.500" r="5.300" fill="#7a4a40" stroke="#5a3a32" stroke-width="0.600"/><path d="M5.300 9.800L9.200 5.800" stroke="#4a3a36" stroke-width="1.200"/><circle cx="9.600" cy="5.400" r="1.300" fill="none" stroke="#4a3a36" stroke-width="0.900"/><path d="M14.600 11.600V14.200H12Z" fill="#161616"/></svg></div>
<div class="tb" id="t-auto" style="left:292.700px;width:16px;background:#e3dc7c;"><svg width="16" height="15" viewBox="0 0 16 15"><circle cx="8" cy="7.500" r="5.700" fill="#f04a2a" stroke="#3a1a10" stroke-width="0.700"/><path d="M6.700 4.800Q4.800 7.500 6.700 10.200M9.300 4.800Q11.200 7.500 9.300 10.200" stroke="#1a0a05" stroke-width="1.300" fill="none"/></svg></div>
<div class="tb" id="t-keysel" style="left:316.500px;width:15.500px;"><svg width="15.5" height="15" viewBox="0 0 15.5 15"><circle cx="7.700" cy="7.500" r="5.600" fill="#f39a2b" stroke="#3a2005" stroke-width="0.700"/><circle cx="7.700" cy="7.500" r="2.600" fill="none" stroke="#1a1005" stroke-width="1.300" stroke-dasharray="1.400 0.640"/><circle cx="7.700" cy="7.500" r="1.700" fill="none" stroke="#1a1005" stroke-width="1"/></svg></div>
<div class="tb blue" id="t-kmove" style="left:334.400px;width:15.300px;"><svg width="15.5" height="15" viewBox="0 0 15.5 15"><g stroke="#8a4a08" fill="#8a4a08"><g transform="rotate(0 7.7 7.5)"><path d="M7.7 7.5V3.8" stroke-width="2" fill="none"/><path d="M5.7 4.0L7.7 1.7999999999999998L9.7 4.0Z" stroke-width="0.1"/></g><g transform="rotate(90 7.7 7.5)"><path d="M7.7 7.5V3.8" stroke-width="2" fill="none"/><path d="M5.7 4.0L7.7 1.7999999999999998L9.7 4.0Z" stroke-width="0.1"/></g><g transform="rotate(180 7.7 7.5)"><path d="M7.7 7.5V3.8" stroke-width="2" fill="none"/><path d="M5.7 4.0L7.7 1.7999999999999998L9.7 4.0Z" stroke-width="0.1"/></g><g transform="rotate(270 7.7 7.5)"><path d="M7.7 7.5V3.8" stroke-width="2" fill="none"/><path d="M5.7 4.0L7.7 1.7999999999999998L9.7 4.0Z" stroke-width="0.1"/></g></g><g stroke="#f39a2b" fill="#f39a2b"><g transform="rotate(0 7.7 7.5)"><path d="M7.7 7.5V3.8999999999999995" stroke-width="1.2" fill="none"/><path d="M6.1 4.1L7.7 2.2L9.3 4.1Z" stroke-width="0.1"/></g><g transform="rotate(90 7.7 7.5)"><path d="M7.7 7.5V3.8999999999999995" stroke-width="1.2" fill="none"/><path d="M6.1 4.1L7.7 2.2L9.3 4.1Z" stroke-width="0.1"/></g><g transform="rotate(180 7.7 7.5)"><path d="M7.7 7.5V3.8999999999999995" stroke-width="1.2" fill="none"/><path d="M6.1 4.1L7.7 2.2L9.3 4.1Z" stroke-width="0.1"/></g><g transform="rotate(270 7.7 7.5)"><path d="M7.7 7.5V3.8999999999999995" stroke-width="1.2" fill="none"/><path d="M6.1 4.1L7.7 2.2L9.3 4.1Z" stroke-width="0.1"/></g></g></svg></div>
<div class="tb blue" id="t-kscale" style="left:350.300px;width:15.700px;"><svg width="15.8" height="15" viewBox="0 0 15.8 15"><rect x="3.400" y="3" width="9.200" height="9.200" rx="0.600" fill="#f39a2b" stroke="#4a2a05" stroke-width="0.700"/><path d="M3.400 7.700H7.900V12.200M7.900 7.700L12.600 3" stroke="#6a3c08" stroke-width="0.700" fill="none"/></svg></div>
<div class="tb blue" id="t-krot" style="left:366.500px;width:15.900px;"><svg width="16" height="15" viewBox="0 0 16 15"><g stroke="#8a4a08"><path d="M3.900 9.400A4.500 4.500 0 0 1 10.300 3.600" fill="none" stroke-width="2.100"/><path d="M12.100 5.600A4.500 4.500 0 0 1 5.700 11.400" fill="none" stroke-width="2.100"/></g><g stroke="#f39a2b"><path d="M3.900 9.400A4.500 4.500 0 0 1 10.300 3.600" fill="none" stroke-width="1.400"/><path d="M12.100 5.600A4.500 4.500 0 0 1 5.700 11.400" fill="none" stroke-width="1.400"/></g><path d="M9.600 2L12.600 4.900L8.800 5.300Z" fill="#f39a2b"/><path d="M6.400 13L3.400 10.100L7.200 9.700Z" fill="#f39a2b"/></svg></div>
<div class="tb blue" id="t-kparam" style="left:382.900px;width:16.200px;"><svg width="16.3" height="15" viewBox="0 0 16.3 15"><circle cx="8.100" cy="7.500" r="5.800" fill="none" stroke="#5a3005" stroke-width="1.800"/><circle cx="8.100" cy="7.500" r="5.800" fill="none" stroke="#f0871a" stroke-width="1.100"/><text x="8.300" y="10.600" text-anchor="middle" font-family="Liberation Sans,sans-serif" font-weight="bold" font-size="8.600" fill="#0c0c0c" stroke="#0c0c0c" stroke-width="0.300">P</text></svg></div>
<div class="tb" id="t-kpla" style="left:399.600px;width:16px;"><svg width="16" height="15" viewBox="0 0 16 15"><circle cx="3.8" cy="3.6" r="1.250" fill="#f39a2b"/><circle cx="7.8" cy="3.6" r="1.250" fill="#f39a2b"/><circle cx="11.8" cy="3.6" r="1.250" fill="#0e0e0e"/><circle cx="3.8" cy="7.6" r="1.250" fill="#f39a2b"/><circle cx="7.8" cy="7.6" r="1.250" fill="#f39a2b"/><circle cx="11.8" cy="7.6" r="1.250" fill="#0e0e0e"/><circle cx="3.8" cy="11.6" r="1.250" fill="#0e0e0e"/><circle cx="7.8" cy="11.6" r="1.250" fill="#0e0e0e"/><circle cx="11.8" cy="11.6" r="1.250" fill="#0e0e0e"/></svg></div>
<div class="tb blue" id="t-sound" style="left:423px;width:15.300px;"><svg width="15.3" height="15" viewBox="0 0 15.3 15"><path d="M2.600 11.800L6.800 3.200L10 9.800Z" fill="#0e0e0e"/><path d="M2.300 10.300L5 13.200L8 11" fill="#0e0e0e"/><path d="M8.500 5A3.500 3.500 0 0 1 11.300 9M9.200 3.300A5.300 5.300 0 0 1 13.100 8.300M10 1.800A7 7 0 0 1 14.800 7.600" stroke="#0e0e0e" stroke-width="0.900" fill="none"/></svg></div>
<div class="tb blue" id="t-film" style="left:438.700px;width:16.300px;"><svg width="16.3" height="15" viewBox="0 0 16.3 15"><rect x="4.600" y="1.400" width="7.400" height="12.200" fill="#1a1005"/><rect x="6" y="2.200" width="4.600" height="2.900" fill="#f39a2b"/><rect x="6" y="6" width="4.600" height="2.900" fill="#f39a2b"/><rect x="6" y="9.800" width="4.600" height="2.900" fill="#f39a2b"/><path d="M5.300 1.800V13.400M11.300 1.800V13.400" stroke="#f39a2b" stroke-width="0.700" stroke-dasharray="0.900 0.800"/><path d="M15.700 12V14.600H13.100Z" fill="#161616"/></svg></div>

<!-- ===== material manager ===== -->
<div class="abs" id="matpanel" style="left:24.500px;top:372px;width:252px;height:70.500px;background:#3d3d3d;border:0.600px solid #4a4a4a;box-sizing:border-box;"></div>
<div class="abs" style="left:25px;top:386px;width:251px;height:0.800px;background:#2c2c2c;"></div>
<svg class="abs" style="left:27px;top:375px;" width="11" height="9" viewBox="0 0 11 9"><path d="M1 2H9.400M1 4.500H9.400M1 7H9.400" stroke="#bdbdbd" stroke-width="1"/></svg>
<div class="t w" style="left:42.500px;top:374.500px;">Создать</div>
<div class="t w" style="left:75px;top:374.500px;">Правка</div>
<div class="t w" style="left:105px;top:374.500px;">Вид</div>
<div class="t w" style="left:124px;top:374.500px;">Выделить</div>
<div class="t w" style="left:161px;top:374.500px;">Материал</div>
<div class="t w" style="left:199px;top:374.500px;">Текстура</div>

<!-- ===== coordinates manager ===== -->
<div class="abs" id="coordpanel" style="left:278.400px;top:372px;width:177.600px;height:70.500px;background:#3d3d3d;border:0.600px solid #4a4a4a;box-sizing:border-box;"></div>
<div class="abs" style="left:279px;top:385.700px;width:176.500px;height:0.800px;background:#2c2c2c;"></div>
<svg class="abs" style="left:281px;top:375px;" width="11" height="9" viewBox="0 0 11 9"><path d="M1 2H9.400M1 4.500H9.400M1 7H9.400" stroke="#bdbdbd" stroke-width="1"/></svg>
<div class="t dim" style="left:295px;top:375px;">--</div>
<div class="t dim" style="left:349.500px;top:375px;">--</div>
<div class="t dim" style="left:403.500px;top:375px;">--</div>

<!-- ===== status bar ===== -->
<div class="abs" id="statusbar" style="left:0;top:446px;width:457px;height:13px;background:#3d3d3d;"></div>
<svg class="abs" style="left:1px;top:444.500px;" width="456" height="2" viewBox="0 0 456 2"><path d="M0 1H456" stroke="#525252" stroke-width="0.800" stroke-dasharray="1 1"/></svg>
<svg class="abs" style="left:3px;top:447.500px;" width="11" height="9" viewBox="0 0 11 9"><path d="M1 2H9.400M1 4.500H9.400M1 7H9.400" stroke="#bdbdbd" stroke-width="1"/></svg>

<div class="cl" style="left:281px;top:391.5px;">X</div>
<div class="cf" style="left:288px;top:391.5px;width:49.200px;"></div>
<div class="cv" style="left:291px;top:391.5px;">0 cm</div>
<svg class="sp" style="left:331.5px;top:392.3px;" viewBox="0 0 5 8"><path d="M1 3L2.5 1.4L4 3M1 5L2.5 6.600L4 5" stroke="#5c5c5c" stroke-width="0.700" fill="none"/></svg>
<div class="cl" style="left:339px;top:391.5px;">X</div>
<div class="cf" style="left:346.300px;top:391.5px;width:48.500px;"></div>
<div class="cv" style="left:349.300px;top:391.5px;">0 cm</div>
<svg class="sp" style="left:389px;top:392.3px;" viewBox="0 0 5 8"><path d="M1 3L2.5 1.4L4 3M1 5L2.5 6.600L4 5" stroke="#5c5c5c" stroke-width="0.700" fill="none"/></svg>
<div class="cl" style="left:397px;top:391.5px;">H</div>
<div class="cf" style="left:405px;top:391.5px;width:47.200px;"></div>
<div class="cv" style="left:408px;top:391.5px;">0 °</div>
<svg class="sp" style="left:446.5px;top:392.3px;" viewBox="0 0 5 8"><path d="M1 3L2.5 1.4L4 3M1 5L2.5 6.600L4 5" stroke="#5c5c5c" stroke-width="0.700" fill="none"/></svg>
<div class="cl" style="left:281px;top:404.7px;">Y</div>
<div class="cf" style="left:288px;top:404.7px;width:49.200px;"></div>
<div class="cv" style="left:291px;top:404.7px;">0 cm</div>
<svg class="sp" style="left:331.5px;top:405.5px;" viewBox="0 0 5 8"><path d="M1 3L2.5 1.4L4 3M1 5L2.5 6.600L4 5" stroke="#5c5c5c" stroke-width="0.700" fill="none"/></svg>
<div class="cl" style="left:339px;top:404.7px;">Y</div>
<div class="cf" style="left:346.300px;top:404.7px;width:48.500px;"></div>
<div class="cv" style="left:349.300px;top:404.7px;">0 cm</div>
<svg class="sp" style="left:389px;top:405.5px;" viewBox="0 0 5 8"><path d="M1 3L2.5 1.4L4 3M1 5L2.5 6.600L4 5" stroke="#5c5c5c" stroke-width="0.700" fill="none"/></svg>
<div class="cl" style="left:397px;top:404.7px;">P</div>
<div class="cf" style="left:405px;top:404.7px;width:47.200px;"></div>
<div class="cv" style="left:408px;top:404.7px;">0 °</div>
<svg class="sp" style="left:446.5px;top:405.5px;" viewBox="0 0 5 8"><path d="M1 3L2.5 1.4L4 3M1 5L2.5 6.600L4 5" stroke="#5c5c5c" stroke-width="0.700" fill="none"/></svg>
<div class="cl" style="left:281px;top:418px;">Z</div>
<div class="cf" style="left:288px;top:418px;width:49.200px;"></div>
<div class="cv" style="left:291px;top:418px;">0 cm</div>
<svg class="sp" style="left:331.5px;top:418.8px;" viewBox="0 0 5 8"><path d="M1 3L2.5 1.4L4 3M1 5L2.5 6.600L4 5" stroke="#5c5c5c" stroke-width="0.700" fill="none"/></svg>
<div class="cl" style="left:339px;top:418px;">Z</div>
<div class="cf" style="left:346.300px;top:418px;width:48.500px;"></div>
<div class="cv" style="left:349.300px;top:418px;">0 cm</div>
<svg class="sp" style="left:389px;top:418.8px;" viewBox="0 0 5 8"><path d="M1 3L2.5 1.4L4 3M1 5L2.5 6.600L4 5" stroke="#5c5c5c" stroke-width="0.700" fill="none"/></svg>
<div class="cl" style="left:397px;top:418px;">B</div>
<div class="cf" style="left:405px;top:418px;width:47.200px;"></div>
<div class="cv" style="left:408px;top:418px;">0 °</div>
<svg class="sp" style="left:446.5px;top:418.8px;" viewBox="0 0 5 8"><path d="M1 3L2.5 1.4L4 3M1 5L2.5 6.600L4 5" stroke="#5c5c5c" stroke-width="0.700" fill="none"/></svg>
<div class="abs" style="left:287.700px;top:432px;width:48.600px;height:8.800px;background:#494949;border-radius:1.500px;"></div>
<div class="t" style="left:291.500px;top:431.500px;color:#8c8c8c;">Мир</div>
<svg class="abs" style="left:328.500px;top:434.500px;" width="7" height="5" viewBox="0 0 7 5"><path d="M1 1L3.500 3.500L6 1" stroke="#8c8c8c" stroke-width="0.800" fill="none"/></svg>
<div class="abs" style="left:346px;top:432px;width:48.500px;height:8.800px;background:#494949;border-radius:1.500px;"></div>
<div class="t" style="left:349.500px;top:431.500px;color:#8c8c8c;">Масштаб</div>
<svg class="abs" style="left:386.500px;top:434.500px;" width="7" height="5" viewBox="0 0 7 5"><path d="M1 1L3.500 3.500L6 1" stroke="#8c8c8c" stroke-width="0.800" fill="none"/></svg>
<div class="abs" style="left:404.300px;top:432px;width:48px;height:8.800px;background:#565656;border-radius:1.500px;"></div>
<div class="t" style="left:410.500px;top:431.500px;color:#e2e2e2;">Применить</div>

<!-- ===== right column separator ===== -->
<div class="abs" style="left:455.700px;top:33px;width:1.500px;height:426px;background:#383838;"></div>

<!-- ===== object manager ===== -->
<div class="abs" id="objpanel" style="left:457.300px;top:33px;width:168.700px;height:200px;background:#3d3d3d;"></div>
<div class="abs" id="objlist" style="left:457.800px;top:48.700px;width:167.700px;height:181.800px;background:#3d3d3d;border:0.600px solid #4a4a4a;box-sizing:border-box;"></div>
<div class="abs" style="left:622.300px;top:49.300px;width:2.800px;height:180.600px;background:#464646;"></div>
<div class="abs" style="left:481.300px;top:49px;width:0.800px;height:180.500px;background:#4d4d4d;"></div>
<svg class="abs" style="left:460.500px;top:37px;" width="11" height="9" viewBox="0 0 11 9"><path d="M1 2H9.400M1 4.500H9.400M1 7H9.400" stroke="#bdbdbd" stroke-width="1"/></svg>
<div class="t w" style="left:475.500px;top:36.500px;">Файл</div>
<div class="t w" style="left:499.500px;top:36.500px;">Правка</div>
<div class="t w" style="left:529.500px;top:36.500px;">Вид</div>
<div class="t w" style="left:549px;top:36.500px;width:18.500px;overflow:hidden;">Объекты</div>
<svg class="abs" style="left:571px;top:38.500px;" width="4" height="6" viewBox="0 0 4 6"><path d="M0.500 0.500L3.300 3L0.500 5.500Z" fill="#d0d0d0"/></svg>
<svg class="abs" style="left:578px;top:35px;" width="48" height="13" viewBox="0 0 48 13"><g stroke="#989898" stroke-width="0.700" fill="none">
<circle cx="4.800" cy="4.800" r="2.500"/><path d="M6.300 6.800L9 10.500" stroke-width="1.100"/>
<path d="M13 7.200L17.700 2.500L22.400 7.200H20.300V11H15.100V7.200Z"/>
<path d="M25 2.600H33.600L30.200 6.600V10.800L28.400 9.800V6.600Z"/>
<rect x="38.200" y="2" width="6.600" height="9"/><path d="M41.500 4.800V8.200M39.800 6.500H43.200" stroke="#d0d0d0" stroke-width="1"/>
</g></svg>

<!-- ===== attribute manager ===== -->
<div class="abs" id="attrpanel" style="left:457.300px;top:233px;width:168.700px;height:226px;background:#3d3d3d;"></div>
<svg class="abs" style="left:460.500px;top:236px;" width="11" height="9" viewBox="0 0 11 9"><path d="M1 2H9.400M1 4.500H9.400M1 7H9.400" stroke="#bdbdbd" stroke-width="1"/></svg>
<div class="t w" style="left:476px;top:235.500px;">Режим</div>
<div class="t w" style="left:505px;top:235.500px;width:16px;overflow:hidden;">Правка</div>
<svg class="abs" style="left:524px;top:237.500px;" width="4" height="6" viewBox="0 0 4 6"><path d="M0.500 0.500L3.300 3L0.500 5.500Z" fill="#d0d0d0"/></svg>
<svg class="abs" style="left:530px;top:234px;" width="96" height="13" viewBox="0 0 96 13"><g stroke="#555" stroke-width="0.800" fill="none">
<path d="M9.500 6.500H2.500M5 4L2.500 6.500L5 9"/><path d="M12 6.500H19M16.500 4L19 6.500L16.500 9"/><path d="M26.500 10.500V3M24 5.500L26.500 3L29 5.500"/></g>
<g stroke="#989898" stroke-width="0.700" fill="none">
<circle cx="41.300" cy="4.800" r="2.400"/><path d="M42.800 6.800L45.300 10.500" stroke-width="1.100"/>
<path d="M49.300 2.800H57.600L54.300 6.600V10.800L52.600 9.800V6.600Z"/>
<rect x="62.500" y="6" width="7" height="4.800" rx="0.800"/><path d="M64 6V4.500A2 2 0 0 1 68 4.300"/><rect x="65.300" y="7.600" width="1.400" height="1.400" fill="#a8a8a8" stroke="none"/>
<circle cx="77.500" cy="6.600" r="4.200"/><circle cx="77.500" cy="6.600" r="1.300"/>
<rect x="86.200" y="2" width="6.600" height="9.200"/><path d="M89.500 5V8.400M87.800 6.700H91.200" stroke="#d0d0d0" stroke-width="1"/>
</g></svg>
<svg class="abs" style="left:461.500px;top:249.500px;" width="12" height="13" viewBox="0 0 12 13"><rect x="0.800" y="0.800" width="5.400" height="9.800" fill="#e8e8e8"/><path d="M1.800 1.200V10.400" stroke="#9a9a9a" stroke-width="0.600" stroke-dasharray="0.800 0.800"/><path d="M4.600 1L6.600 4" stroke="#ee5a2a" stroke-width="1"/><circle cx="6.700" cy="8" r="2.900" fill="none" stroke="#ee5220" stroke-width="1.500" stroke-dasharray="1.300 0.980"/><circle cx="6.700" cy="8" r="2" fill="#3d3d3d" stroke="#ee5220" stroke-width="1.100"/></svg>
<div class="t w" style="left:475px;top:250.500px;">Сцена</div>
<div class="tabb" style="left:459.800px;top:264.300px;width:72.700px;background:#7fa4dc;color:#1c1c1c;">Настройки сцены</div>
<div class="tabb" style="left:533px;top:264.300px;width:73px;">Cineware</div>
<div class="tabb" style="left:459.800px;top:275.700px;width:72.700px;">Информация</div>
<div class="tabb" style="left:533px;top:275.700px;width:73px;">Динамика</div>
<div class="tabb" style="left:459.800px;top:287.100px;width:72.700px;">Ссылки</div>
<div class="tabb" style="left:533px;top:287.100px;width:73px;">Выполнить</div>
<div class="tabb" style="left:459.800px;top:298.500px;width:72.700px;">Интерполяция ключей</div>
<div class="tabb" style="left:533px;top:298.500px;width:73px;color:#e0d080;">Узлы сцены</div>
<div class="lbl" style="left:461px;top:312.700px;font-weight:bold;color:#f0f0f0;font-size:6.400px;">Настройки сцены</div>

<div class="lbl" style="left:473.700px;top:326px;">Масштаб сцены</div>
<svg class="abs" style="left:525.0px;top:331.8px;" width="31.6" height="2" viewBox="0 0 31.6 2"><path d="M31.6 1H0" stroke="#909090" stroke-width="0.900" stroke-dasharray="0.900 2.880"/></svg>
<div class="fld" style="left:560.800px;top:325.400px;width:38.800px;height:9.800px;"></div>
<div class="t w" style="left:564px;top:325.500px;">1</div>
<div class="abs" style="left:603px;top:325.400px;width:12.200px;height:9.800px;background:#525252;border-radius:1.500px 0 0 1.500px;overflow:hidden;"><div class="t w" style="left:4px;top:0;">Сантиметры</div></div>
<div class="abs" style="left:467px;top:338px;width:148.200px;height:9.600px;background:#525252;border-radius:1.500px 0 0 1.500px;overflow:hidden;"><div class="t w" style="left:45px;top:0;font-size:6.450px;">Масштабировать сцену...</div></div>
<div class="abs" style="left:459px;top:350.300px;width:156px;height:0.800px;background:#343434;"></div>

<div class="lbl" style="left:473.700px;top:355px;">Кадров в секунду</div>
<svg class="abs" style="left:528.8px;top:360.8px;" width="27.8" height="2" viewBox="0 0 27.8 2"><path d="M27.8 1H0" stroke="#909090" stroke-width="0.900" stroke-dasharray="0.900 2.880"/></svg>
<div class="fld" style="left:560.800px;top:354.400px;width:38.800px;height:9.600px;"></div>
<div class="t w" style="left:564px;top:354.500px;">25</div>
<div class="lbl" style="left:473.700px;top:368.300px;">Мин. время</div>
<svg class="abs" style="left:511.8px;top:374.0px;" width="44.8" height="2" viewBox="0 0 44.8 2"><path d="M44.8 1H0" stroke="#909090" stroke-width="0.900" stroke-dasharray="0.900 2.880"/></svg>
<div class="fld" style="left:560.800px;top:368.600px;width:38.800px;height:9px;"></div>
<div class="t w" style="left:564px;top:368.300px;">0 K</div>
<div class="lbl" style="left:473.700px;top:381px;">Начало просмотра</div>
<svg class="abs" style="left:532.5px;top:386.8px;" width="24.1" height="2" viewBox="0 0 24.1 2"><path d="M24.1 1H0" stroke="#909090" stroke-width="0.900" stroke-dasharray="0.900 2.880"/></svg>
<div class="fld" style="left:560.800px;top:381.300px;width:38.800px;height:9.200px;"></div>
<div class="t w" style="left:564px;top:381px;">0 K</div>
<div class="abs" style="left:459px;top:393.500px;width:156px;height:0.800px;background:#343434;"></div>
<div class="lbl" style="left:473.700px;top:398.300px;">Детализация</div>
<svg class="abs" style="left:513.0px;top:404.0px;" width="43.6" height="2" viewBox="0 0 43.6 2"><path d="M43.6 1H0" stroke="#909090" stroke-width="0.900" stroke-dasharray="0.900 2.880"/></svg>
<div class="fld" style="left:560.800px;top:398.500px;width:38.800px;height:9.500px;"></div>
<div class="t w" style="left:564px;top:398.300px;">100 %</div>
<div class="abs" style="left:459px;top:410.600px;width:156px;height:0.800px;background:#343434;"></div>
<div class="lbl" style="left:473.700px;top:414.500px;">Анимация</div>
<svg class="abs" style="left:505.0px;top:420.3px;" width="51.6" height="2" viewBox="0 0 51.6 2"><path d="M51.6 1H0" stroke="#909090" stroke-width="0.900" stroke-dasharray="0.900 2.880"/></svg>
<div class="chk" style="left:560.200px;top:415.800px;"></div>
<div class="lbl" style="left:473.700px;top:426.600px;">Генераторы</div>
<svg class="abs" style="left:513.0px;top:432.4px;" width="43.6" height="2" viewBox="0 0 43.6 2"><path d="M43.6 1H0" stroke="#909090" stroke-width="0.900" stroke-dasharray="0.900 2.880"/></svg>
<div class="chk" style="left:560.200px;top:427.800px;"></div>
<div class="lbl" style="left:473.700px;top:438.600px;">Система движения</div>
<svg class="abs" style="left:533.0px;top:444.4px;" width="23.6" height="2" viewBox="0 0 23.6 2"><path d="M23.6 1H0" stroke="#909090" stroke-width="0.900" stroke-dasharray="0.900 2.880"/></svg>
<div class="chk" style="left:560.200px;top:439.600px;"></div>
<svg class="abs" style="left:560.200px;top:415.800px;" width="8" height="32" viewBox="0 0 8 32"><g stroke="#222" stroke-width="1.100" fill="none"><path d="M1.800 3.800L3.400 5.400L6.200 1.900"/><path d="M1.800 15.800L3.400 17.400L6.200 13.900"/><path d="M1.800 27.600L3.400 29.200L6.200 25.700"/></g></svg>
<!-- attr scrollbars -->
<svg class="abs" style="left:616px;top:308px;" width="8" height="150" viewBox="0 0 8 150"><g stroke="#7a7a7a" stroke-width="0.800" fill="none"><path d="M1.800 6.500L3.600 4.700L5.400 6.500"/><path d="M1.800 136L3.600 137.800L5.400 136"/></g><rect x="2.500" y="9.700" width="2.200" height="70" rx="1" fill="#575757"/></svg>
<svg class="abs" style="left:459px;top:449px;" width="160" height="9" viewBox="0 0 160 9"><g stroke="#7a7a7a" stroke-width="0.800" fill="none"><path d="M4.300 2.700L2.500 4.500L4.300 6.300"/><path d="M151.500 2.700L153.300 4.500L151.500 6.300"/></g><rect x="7.700" y="3.300" width="68.500" height="2.200" rx="1" fill="#575757"/></svg>

<div class="abs" style="left:457.100px;top:34px;width:0.800px;height:424.500px;background:#474747;"></div>
<!-- ===== right tab strip ===== -->
<div class="abs" id="tabstrip" style="left:626px;top:33px;width:14px;height:426px;background:#2f2f2f;"></div>
<div class="abs" style="left:626px;top:33px;width:13px;height:34.500px;background:#3d3d3d;"></div>
<svg class="abs" style="left:457.500px;top:232.500px;" width="169" height="2" viewBox="0 0 169 2"><path d="M0 1H169" stroke="#4a4a4a" stroke-width="0.800" stroke-dasharray="1 1"/></svg>
<div class="abs" style="left:626px;top:232.800px;width:13px;height:36px;background:#3d3d3d;"></div>
<div class="vt" style="left:637px;top:37.500px;color:#e0e0e0;">Объекты</div>
<div class="vt" style="left:636.500px;top:71px;color:#808080;">Дубли</div>
<div class="vt" style="left:636.500px;top:98px;color:#808080;">Браузер библиотек</div>
<div class="vt" style="left:637px;top:237px;color:#e0e0e0;">Атрибуты</div>
<div class="vt" style="left:636.500px;top:273px;color:#808080;">Слои</div>
<div class="vt" style="left:636.500px;top:295px;color:#808080;">Структура</div>

<svg class="sp" style="left:63px;top:357.8px;" viewBox="0 0 5 8"><path d="M1 3L2.500 1.400L4 3M1 5L2.500 6.600L4 5" stroke="#9a9a9a" stroke-width="0.700" fill="none"/></svg>
<svg class="sp" style="left:131.5px;top:357.8px;" viewBox="0 0 5 8"><path d="M1 3L2.500 1.400L4 3M1 5L2.500 6.600L4 5" stroke="#9a9a9a" stroke-width="0.700" fill="none"/></svg>
<svg class="sp" style="left:449.5px;top:340.8px;" viewBox="0 0 5 8"><path d="M1 3L2.500 1.400L4 3M1 5L2.500 6.600L4 5" stroke="#9a9a9a" stroke-width="0.700" fill="none"/></svg>
<svg class="sp" style="left:594px;top:326.3px;" viewBox="0 0 5 8"><path d="M1 3L2.500 1.400L4 3M1 5L2.500 6.600L4 5" stroke="#9a9a9a" stroke-width="0.700" fill="none"/></svg>
<svg class="sp" style="left:594px;top:355.2px;" viewBox="0 0 5 8"><path d="M1 3L2.500 1.400L4 3M1 5L2.500 6.600L4 5" stroke="#9a9a9a" stroke-width="0.700" fill="none"/></svg>
<svg class="sp" style="left:594px;top:369.1px;" viewBox="0 0 5 8"><path d="M1 3L2.500 1.400L4 3M1 5L2.500 6.600L4 5" stroke="#9a9a9a" stroke-width="0.700" fill="none"/></svg>
<svg class="sp" style="left:594px;top:381.9px;" viewBox="0 0 5 8"><path d="M1 3L2.500 1.400L4 3M1 5L2.500 6.600L4 5" stroke="#9a9a9a" stroke-width="0.700" fill="none"/></svg>
<svg class="sp" style="left:594px;top:399.2px;" viewBox="0 0 5 8"><path d="M1 3L2.500 1.400L4 3M1 5L2.500 6.600L4 5" stroke="#9a9a9a" stroke-width="0.700" fill="none"/></svg>
<!-- ===== window edges ===== -->
<div class="abs" style="left:0;top:0;width:1px;height:19px;background:#9c9c9c;"></div>
<div class="abs" style="left:639px;top:0;width:1px;height:19px;background:#9c9c9c;"></div>
<div class="abs" style="left:0;top:19px;width:1px;height:412px;background:#767676;"></div>
<div class="abs" style="left:0;top:431px;width:1px;height:29px;background:#1d3f7a;"></div>
<div class="abs" style="left:639px;top:19px;width:1px;height:408px;background:#767676;"></div>
<div class="abs" style="left:639px;top:427px;width:1px;height:33px;background:#1d3f7a;"></div>
<div class="abs" style="left:0;top:458.700px;width:640px;height:1.300px;background:#21557a;"></div>

</div>
</body>
</html>
